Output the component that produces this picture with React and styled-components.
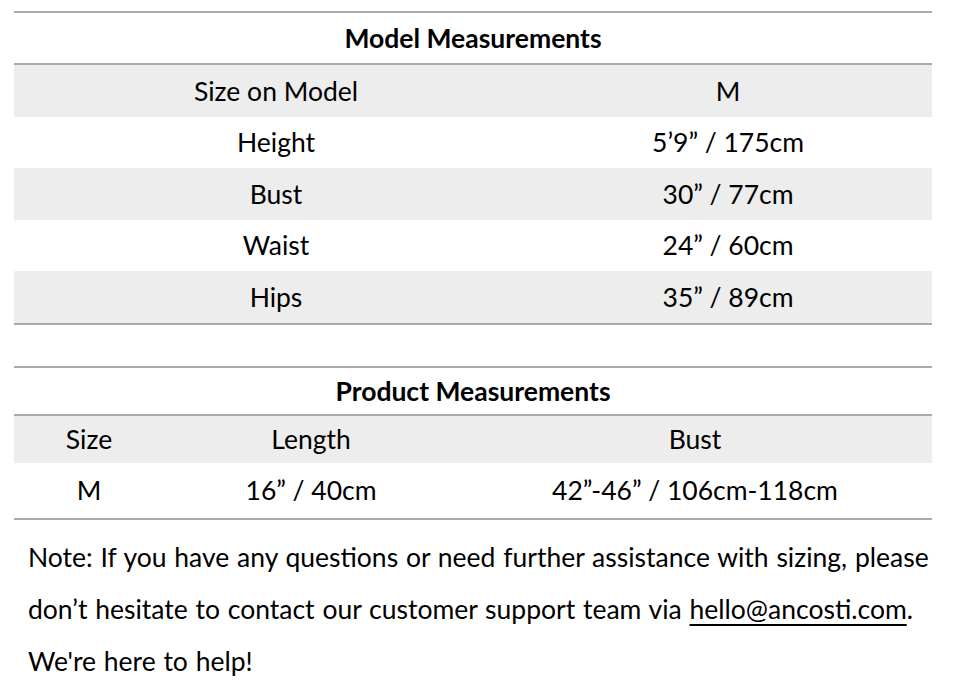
import styled, { createGlobalStyle } from 'styled-components';

const GlobalStyle = createGlobalStyle`
  html, body {
    margin: 0;
    padding: 0;
    background: #fff;
  }

  body {
    font-family: Lato, "Open Sans", "Liberation Sans", sans-serif;
    color: #000;
  }
`;

const Page = styled.div`
  width: 956px;
  padding: 11px 24px 0 14px;
  box-sizing: border-box;
`;

const Table = styled.div`
  display: grid;
  grid-template-columns: ${props => props.$columns};
  border-top: 2px solid #aaa;
  border-bottom: 2px solid #aaa;
  margin-bottom: ${props => props.$gap || '0'};
`;

const Title = styled.div`
  grid-column: 1 / -1;
  height: ${props => props.$height};
  display: flex;
  align-items: center;
  justify-content: center;
  font-weight: 700;
  font-size: 26.5px;
  border-bottom: 2px solid #aaa;
`;

const Cell = styled.div`
  height: ${props => props.$height};
  display: flex;
  align-items: center;
  justify-content: center;
  font-size: 26.5px;
  background: ${props => (props.$shaded ? '#ededed' : '#fff')};
  padding-right: ${props => (props.$last ? '14px' : '0')};
`;

const Note = styled.p`
  margin: 0;
  padding: 11px 0 0 14px;
  font-size: 26.5px;
  line-height: 52px;
  word-spacing: 1px;
  white-space: nowrap;
`;

const Mail = styled.span`
  text-decoration: underline;
  text-underline-offset: 5px;
  text-decoration-thickness: 2px;
`;

const model = [
  ['Size on Model', 'M'],
  ['Height', '5’9” / 175cm'],
  ['Bust', '30” / 77cm'],
  ['Waist', '24” / 60cm'],
  ['Hips', '35” / 89cm'],
];

const product = [
  ['Size', 'Length', 'Bust'],
  ['M', '16” / 40cm', '42”-46” / 106cm-118cm'],
];

export default function App() {
  return (
    <Page>
      <GlobalStyle />
      <Table $columns='524px 1fr' $gap='41px'>
        <Title $height='50px'>Model Measurements</Title>
        {model.map((row, i) =>
          row.map((text, j) => (
            <Cell key={`${i}-${j}`} $height='51.5px' $shaded={i % 2 === 0} $last={j === row.length - 1}>
              {text}
            </Cell>
          ))
        )}
      </Table>
      <Table $columns='150px 294px 1fr'>
        <Title $height='46px'>Product Measurements</Title>
        {product.map((row, i) =>
          row.map((text, j) => (
            <Cell key={`${i}-${j}`} $shaded={i === 0} $height={i === 0 ? '47px' : '55px'}>
              {text}
            </Cell>
          ))
        )}
      </Table>
      <Note>
        Note: If you have any questions or need further assistance with sizing, please
        <br />
        don’t hesitate to contact our customer support team via <Mail>hello@ancosti.com</Mail>.
        <br />
        We're here to help!
      </Note>
    </Page>
  );
}
